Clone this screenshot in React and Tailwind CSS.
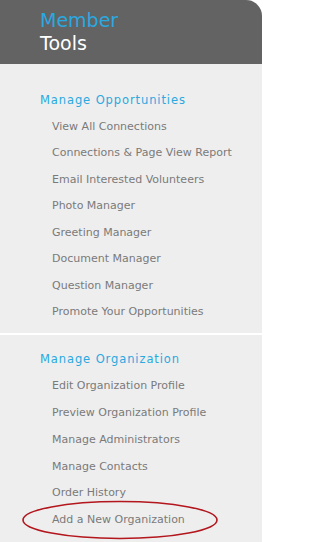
import React from "react";

const sec1 = [
  "View All Connections",
  "Connections & Page View Report",
  "Email Interested Volunteers",
  "Photo Manager",
  "Greeting Manager",
  "Document Manager",
  "Question Manager",
  "Promote Your Opportunities",
];
const sec2 = [
  "Edit Organization Profile",
  "Preview Organization Profile",
  "Manage Administrators",
  "Manage Contacts",
  "Order History",
];

const font = { fontFamily: '"DejaVu Sans", "Open Sans", sans-serif' };

function Heading({ children }) {
  return (
    <div className="h-[26.5px] flex items-center pl-[40px] text-[11.5px] tracking-[0.9px] text-[#2aa9e0]">
      {children}
    </div>
  );
}

function Item({ children, h = "h-[26.5px]" }) {
  return (
    <div className={`${h} flex items-center pl-[52px] text-[11px] text-[#7a7a7a]`}>
      {children}
    </div>
  );
}

export default function App() {
  return (
    <div className="w-[262px] h-[542px] bg-white overflow-hidden" style={font}>
      <div className="h-[542px] bg-[#eeeeee] rounded-tr-[16px] overflow-hidden">
        <div className="h-[64px] bg-[#636363] pl-[40px] pt-[9px] flex flex-col">
          <div className="text-[19px] leading-[23px] text-[#2aa9e0]">Member</div>
          <div className="text-[19px] leading-[23px] text-white">Tools</div>
        </div>
        <div className="pt-[23px]">
          <Heading>Manage Opportunities</Heading>
          {sec1.map((t) => (
            <Item key={t}>{t}</Item>
          ))}
        </div>
        <div className="mt-[7px] h-[2px] bg-white" />
        <div className="pt-[12px]">
          <Heading>Manage Organization</Heading>
          {sec2.map((t) => (
            <Item key={t} h="h-[26.8px]">{t}</Item>
          ))}
          <div className="relative">
            <Item h="h-[26.8px]">Add a New Organization</Item>
            <svg
              className="absolute left-[21px] top-[-8px]"
              width="200"
              height="42"
              viewBox="0 0 200 42"
            >
              <ellipse cx="99" cy="21" rx="97" ry="18.5" fill="none" stroke="#b3161c" strokeWidth="1.6" />
            </svg>
          </div>
        </div>
      </div>
    </div>
  );
}
